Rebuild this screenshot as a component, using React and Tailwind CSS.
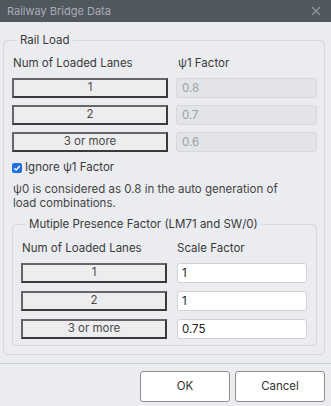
import React from "react";

const font = { fontFamily: "Inter, 'Noto Sans', sans-serif" };

function LaneButton({ children }) {
  return (
    <button className="h-full w-full bg-[#ededef] border-[2px] border-t-[#666] border-l-[#666] border-b-[#3a3a3a] border-r-[#3a3a3a] text-[11.5px] text-[#4a4a4a] leading-none">
      {children}
    </button>
  );
}

function Row({ label, value, disabled }) {
  return (
    <div className="grid grid-cols-[156px_1fr] gap-[8px] h-[20px]">
      <LaneButton>{label}</LaneButton>
      <input
        readOnly
        value={value}
        className={
          disabled
            ? "h-full w-full rounded-[3px] border border-[#d6d8dc] bg-[#e3e4e7] px-[5px] text-[11.5px] text-[#9ca1a8] outline-none"
            : "h-full w-full rounded-[3px] border border-[#cfd1d5] bg-white px-[4px] text-[11.5px] text-[#222] outline-none"
        }
      />
    </div>
  );
}

export default function App() {
  return (
    <div className="w-[331px] h-[406px] bg-[#ebecf0] flex flex-col overflow-hidden text-[#3a3a3a]" style={font}>
      {/* title bar */}
      <div className="h-[22px] bg-[#51575f] flex items-center justify-between pl-[7px] pr-[10px]">
        <span className="text-[11px] text-[#a9aeb5]">Railway Bridge Data</span>
        <svg width="10" height="10" viewBox="0 0 10 10">
          <path d="M1 1 L9 9 M9 1 L1 9" stroke="#8e939a" strokeWidth="1.4" />
        </svg>
      </div>

      {/* Rail Load */}
      <fieldset className="mt-[11px] ml-[3px] mr-[6px] border border-[#d6d8dc] rounded-[4px] pt-[9px] pb-[8px] pl-[8px] pr-[7px]">
        <legend className="ml-[5px] px-[3px] text-[11.5px] leading-[14px] text-[#3a3a3a]">Rail Load</legend>

        <div className="grid grid-cols-[156px_1fr] gap-[8px] h-[14px] text-[11.5px] leading-[14px] text-[#3a3a3a]">
          <span className="pl-[1px]">Num of Loaded Lanes</span>
          <span className="pl-[2px]">ψ1 Factor</span>
        </div>

        <div className="mt-[8px] flex flex-col gap-[7px]">
          <Row label="1" value="0.8" disabled />
          <Row label="2" value="0.7" disabled />
          <Row label="3 or more" value="0.6" disabled />
        </div>

        <label className="mt-[9px] flex items-center gap-[3px] h-[14px] text-[11.5px] text-[#3a3a3a]">
          <span className="w-[10px] h-[10px] rounded-[2px] bg-[#1f6fe5] flex items-center justify-center">
            <svg width="8" height="8" viewBox="0 0 8 8">
              <path d="M1.3 4.2 L3.2 6 L6.8 2" stroke="white" strokeWidth="1.4" fill="none" />
            </svg>
          </span>
          Ignore ψ1 Factor
        </label>

        <p className="mt-[7px] pl-[1px] text-[11.5px] leading-[14px] text-[#444]">
          ψ0 is considered as 0.8 in the auto generation of
          <br />
          load combinations.
        </p>

        {/* Multiple presence */}
        <fieldset className="mt-[7px] border border-[#d6d8dc] rounded-[4px] pt-[10px] pb-[6px] pl-[8px] pr-[9px]">
          <legend className="ml-[5px] px-[3px] text-[11.5px] leading-[14px] text-[#3a3a3a]">
            Mutiple Presence Factor (LM71 and SW/0)
          </legend>

          <div className="grid grid-cols-[146px_1fr] gap-[10px] h-[14px] text-[11.5px] leading-[14px] text-[#3a3a3a]">
            <span className="pl-[1px]">Num of Loaded Lanes</span>
            <span>Scale Factor</span>
          </div>

          <div className="mt-[8px] flex flex-col gap-[8px]">
            {[
              ["1", "1"],
              ["2", "1"],
              ["3 or more", "0.75"],
            ].map(([l, v]) => (
              <div key={l} className="grid grid-cols-[146px_1fr] gap-[10px] h-[20px]">
                <LaneButton>{l}</LaneButton>
                <input
                  readOnly
                  value={v}
                  className="h-full w-full rounded-[3px] border border-[#cfd1d5] bg-white px-[4px] text-[11.5px] text-[#222] outline-none"
                />
              </div>
            ))}
          </div>
        </fieldset>
      </fieldset>

      {/* footer */}
      <div className="mt-[8px] h-px bg-[#cdd0d5]" />
      <div className="flex justify-end gap-[5px] pt-[7px] pr-[6px]">
        <button className="w-[90px] h-[31px] bg-white border border-[#8d8f93] rounded-[3px] text-[11.5px] text-[#333]">OK</button>
        <button className="w-[90px] h-[31px] bg-white border border-[#8d8f93] rounded-[3px] text-[11.5px] text-[#333]">Cancel</button>
      </div>
    </div>
  );
}
